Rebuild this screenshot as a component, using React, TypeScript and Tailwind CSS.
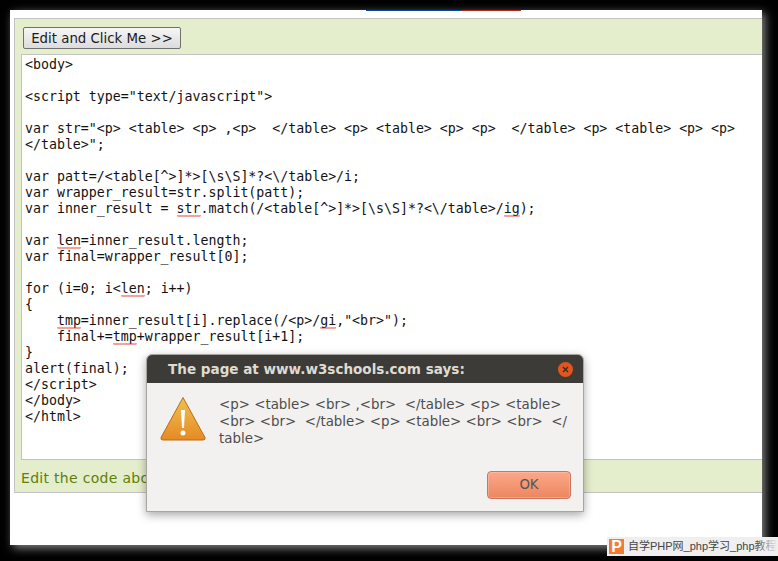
function S({ children }: { children: string }) {
  const w = children.length * 8;
  let d = "M0 1.5";
  for (let x = 1; x <= w; x++) d += ` L${x} ${x % 2 ? 0.5 : 1.5}`;
  return (
    <span className="relative">
      {children}
      <svg width={w} height="2" viewBox={`0 0 ${w} 2`} className="absolute left-0 top-[14px]">
        <path d={d} fill="none" stroke="#e02a1c" strokeWidth="1" />
      </svg>
    </span>
  );
}

export default function App() {
  return (
    <div className="relative w-[778px] h-[561px] overflow-hidden bg-black pt-2.5 pl-2.5">
      <div className="relative w-[752px] h-[535px] bg-white shadow-[3px_3px_9px_rgba(150,150,150,0.9)] pt-2 pl-1">
        <div className="absolute top-0 left-[356px] flex h-px">
          <div className="w-[96px] bg-[#0a4a9c]" />
          <div className="w-[59px] bg-[#b5281e]" />
        </div>
        <div className="h-[475px] border border-r-0 border-[#c3c3c3] bg-[#e5eecc] pt-2 pl-1.5">
          <button className="ml-[2px] block h-[22px] w-[158px] rounded-[2px] border border-[#707070] bg-gradient-to-b from-[#f6f6f6] to-[#dcdcdc] pt-[2px] font-['DejaVu_Sans'] text-[13.33px] leading-none text-[#1a1a1a]">
            Edit and Click Me &gt;&gt;
          </button>
          <div className="mt-[5px] h-[406px] border border-r-0 border-[#c3c3c3] bg-white pl-[3px] pt-[2px]">
            <pre className="font-['DejaVu_Sans_Mono'] text-[13.26px] leading-[16px] text-[#111]">
              {`<body>

<script type="text/javascript">

var str="<p> <table> <p> ,<p>  </table> <p> <table> <p> <p>  </table> <p> <table> <p> <p>
</table>";

var patt=/<table[^>]*>[\\s\\S]*?<\\/table>/i;
var wrapper_result=str.split(patt);
var inner_result = `}<S>str</S>{`.match(/<table[^>]*>[\\s\\S]*?<\\/table>/`}<S>ig</S>{`);

var `}<S>len</S>{`=inner_result.length;
var final=wrapper_result[0];

for (i=0; i<`}<S>len</S>{`; i++)
{
    `}<S>tmp</S>{`=inner_result[i].replace(/<p>/`}<S>gi</S>{`,"<br>");
    final+=`}<S>tmp</S>{`+wrapper_result[i+1];
}
alert(final);
</script>
</body>
</html>`}
            </pre>
          </div>
          <p className="mt-[9px] font-['DejaVu_Sans'] text-[14px] leading-[18px] tracking-[0.3px] text-[#5f7f0a]">
            Edit the code above and click the button
          </p>
        </div>
      </div>

      <div className="absolute left-[146px] top-[354px] h-[158px] w-[438px] overflow-hidden rounded-t-[6px] border border-[#a8a5a0] bg-[#f2f1f0] shadow-[0_3px_10px_rgba(0,0,0,0.35)]">
        <div className="flex h-[28px] items-center justify-between bg-[#3c3b37] pl-[21px] pr-[10px]">
          <span className="font-['DejaVu_Sans'] text-[13.55px] font-bold text-[#dfdbd2]">The page at www.w3schools.com says:</span>
          <span className="flex h-[15px] w-[15px] items-center justify-center rounded-full bg-[#e0561f]">
            <svg width="7" height="7" viewBox="0 0 7 7"><path d="M1 1l5 5M6 1L1 6" stroke="#40241a" strokeWidth="1.2" /></svg>
          </span>
        </div>
        <div className="flex pl-[13px] pt-[13px]">
          <svg width="46" height="46" viewBox="0 0 46 46" className="shrink-0">
            <defs>
              <linearGradient id="w" x1="0" y1="0" x2="0" y2="1">
                <stop offset="0" stopColor="#f0c14f" />
                <stop offset="1" stopColor="#e58a25" />
              </linearGradient>
            </defs>
            <path d="M23 1.5 L45 41.5 Q45.5 44 43 44 L3 44 Q0.5 44 1 41.5 Z" fill="url(#w)" stroke="#bd6a14" strokeWidth="1" strokeLinejoin="round" />
            <path d="M21 14 L25 14 L24 32 L22 32 Z" fill="#fff" />
            <circle cx="23" cy="37" r="2.5" fill="#fff" />
          </svg>
          <p className="ml-[13px] w-[360px] font-['DejaVu_Sans'] text-[13.4px] leading-[17px] whitespace-pre text-[#4c4c4c]">
            {"<p> <table> <br> ,<br>  </table> <p> <table>\n<br> <br>  </table> <p> <table> <br> <br>  </\ntable>"}
          </p>
        </div>
        <div className="absolute right-[12px] bottom-[12px] flex h-[28px] w-[84px] items-center justify-center rounded-[4px] border border-[#c9765a] bg-gradient-to-b from-[#fba888] to-[#ec8660] font-['DejaVu_Sans'] text-[13.33px] text-[#555] shadow-[inset_0_0_0_1px_rgba(255,255,255,0.2)]">
          OK
        </div>
      </div>

      <div className="absolute left-[607px] top-[537px] flex h-[19px] w-[171px] items-center overflow-hidden whitespace-nowrap bg-[#efefef] pl-[2px]">
        <span className="flex h-[15px] w-[15px] shrink-0 items-center justify-center bg-[#f47b32] font-['Liberation_Sans'] text-[16px] font-bold leading-none text-white">P</span>
        <span className="ml-[4px] font-['Liberation_Sans','Noto_Sans_CJK_SC',sans-serif] text-[11px] text-[#444]">自学PHP网_php学习_php教程</span>
        <div className="absolute right-0 top-0 h-full w-[24px] bg-gradient-to-r from-transparent to-[#efefef]" />
      </div>
    </div>
  );
}
